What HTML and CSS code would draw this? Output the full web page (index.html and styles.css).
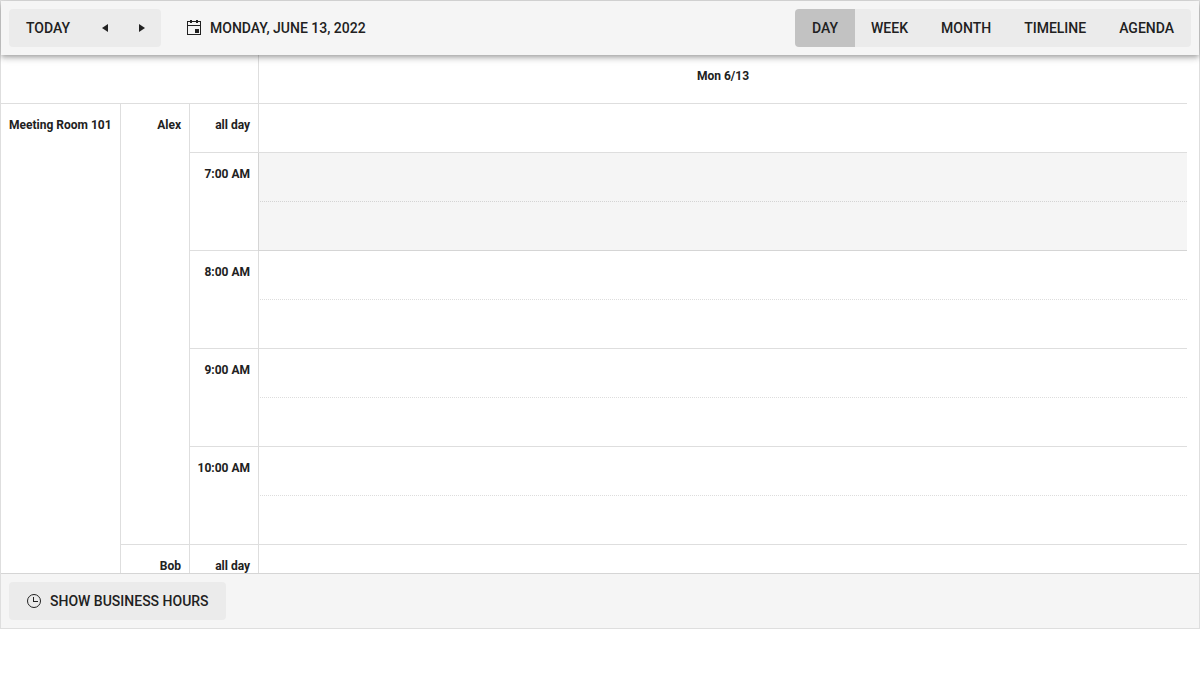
FILE: index.html
```html
<!DOCTYPE html>
<html lang="en">
<head>
<meta charset="utf-8">
<meta name="viewport" content="width=device-width, initial-scale=1">
<title>Scheduler</title>
<link rel="stylesheet" href="styles.css">
</head>
<body>
<main class="scheduler">
  <header class="toolbar">
    <div class="button-group">
      <button class="button" type="button">Today</button>
      <button class="button button-icon" type="button" aria-label="Previous"><svg class="icon" viewBox="0 0 16 16" aria-hidden="true"><path d="M11 4v8L5 8z"/></svg></button>
      <button class="button button-icon" type="button" aria-label="Next"><svg class="icon" viewBox="0 0 16 16" aria-hidden="true"><path d="M5 4v8l6-4z"/></svg></button>
    </div>
    <button class="button button-flat" type="button"><svg class="icon" viewBox="0 0 16 16" aria-hidden="true"><path fill-rule="evenodd" d="M4 0h2v1h4V0h2v1h3v14H1V1h3zM2 2v3h12V2h-2v1h-2V2H6v1H4V2zM2 6v8h12V6zM9 9h4v4H9z"/></svg>Monday, June 13, 2022</button>
    <div class="button-group views">
      <button class="button selected" type="button" aria-pressed="true">Day</button>
      <button class="button" type="button">Week</button>
      <button class="button" type="button">Month</button>
      <button class="button" type="button">Timeline</button>
      <button class="button" type="button">Agenda</button>
    </div>
  </header>
  <div class="schedule">
    <table class="grid">
      <colgroup><col class="col-room"><col class="col-label"><col class="col-label"><col></colgroup>
      <thead>
        <tr><td class="corner" colspan="3"></td><th class="day" scope="col">Mon 6/13</th></tr>
      </thead>
      <tbody>
        <tr><th class="room" scope="rowgroup" rowspan="10">Meeting Room 101</th><th class="person" scope="rowgroup" rowspan="9">Alex</th><th class="time" scope="row">all day</th><td></td></tr>
        <tr><th class="time" scope="row" rowspan="2">7:00 AM</th><td class="half off-hours"></td></tr>
        <tr><td class="off-hours"></td></tr>
        <tr><th class="time" scope="row" rowspan="2">8:00 AM</th><td class="half"></td></tr>
        <tr><td></td></tr>
        <tr><th class="time" scope="row" rowspan="2">9:00 AM</th><td class="half"></td></tr>
        <tr><td></td></tr>
        <tr><th class="time" scope="row" rowspan="2">10:00 AM</th><td class="half"></td></tr>
        <tr><td></td></tr>
        <tr><th class="person" scope="rowgroup">Bob</th><th class="time" scope="row">all day</th><td></td></tr>
      </tbody>
    </table>
  </div>
  <footer class="footer">
    <button class="button" type="button"><svg class="icon" viewBox="0 0 16 16" aria-hidden="true"><circle cx="8" cy="8" r="6.5" fill="none" stroke="currentColor"/><path d="M7 4h1v4h4v1H7z"/></svg>Show business hours</button>
  </footer>
</main>
</body>
</html>
```
FILE: styles.css
```css
* {
  box-sizing: border-box;
}

body {
  margin: 0;
  background: #fff;
  color: #212121;
  font: 14px/20px Roboto, sans-serif;
}

.scheduler {
  border: 1px solid #dedede;
}

.toolbar {
  position: relative;
  display: flex;
  align-items: center;
  gap: 8px;
  padding: 8px;
  background: #f5f5f5;
  box-shadow: 0 2px 4px -1px rgba(0, 0, 0, 0.2), 0 4px 5px 0 rgba(0, 0, 0, 0.14), 0 1px 10px 0 rgba(0, 0, 0, 0.12);
}

.button-group {
  display: flex;
}

.button-group .button {
  border-radius: 0;
}

.button-group .button + .button {
  margin-left: -1px;
}

.button-group .button:first-child {
  border-radius: 4px 0 0 4px;
}

.button-group .button:last-child {
  border-radius: 0 4px 4px 0;
}

.views {
  margin-left: auto;
}

.button {
  display: inline-flex;
  align-items: center;
  gap: 8px;
  height: 38px;
  margin: 0;
  padding: 8px 17px;
  border: 0;
  border-radius: 4px;
  background: #ebebeb;
  color: inherit;
  font: inherit;
  font-weight: 500;
  text-transform: uppercase;
  white-space: nowrap;
  cursor: pointer;
}

.button-icon {
  padding: 8px 11px;
}

.button-flat {
  background: transparent;
}

.button.selected {
  z-index: 1;
  background: #c2c2c2;
}

.icon {
  width: 16px;
  height: 16px;
  fill: currentColor;
}

.schedule {
  height: 518px;
  padding-right: 12px;
  overflow: hidden;
}

.grid {
  width: 100%;
  table-layout: fixed;
  border-spacing: 0;
  font-size: 12px;
}

.col-room {
  width: 119px;
}

.col-label {
  width: 69px;
}

.grid th,
.grid td {
  height: 49px;
  padding: 8px;
  border: 0 solid rgba(0, 0, 0, 0.13);
  border-width: 0 0 1px 1px;
  vertical-align: top;
}

.grid th {
  padding: 11px 8px;
  font-weight: 700;
  text-align: right;
  white-space: nowrap;
}

.grid .time,
.grid .person {
  padding-left: 0;
}

.grid .corner,
.grid .room {
  border-left-width: 0;
}

.grid .room {
  padding-right: 0;
  text-align: left;
}

.grid .day {
  text-align: center;
}

.grid .half {
  border-bottom-style: dotted;
}

.grid .off-hours {
  background: #f5f5f5;
}

.footer {
  padding: 8px;
  border-top: 1px solid #d5d5d5;
  background: #f5f5f5;
}

.footer .button {
  display: flex;
}
```
